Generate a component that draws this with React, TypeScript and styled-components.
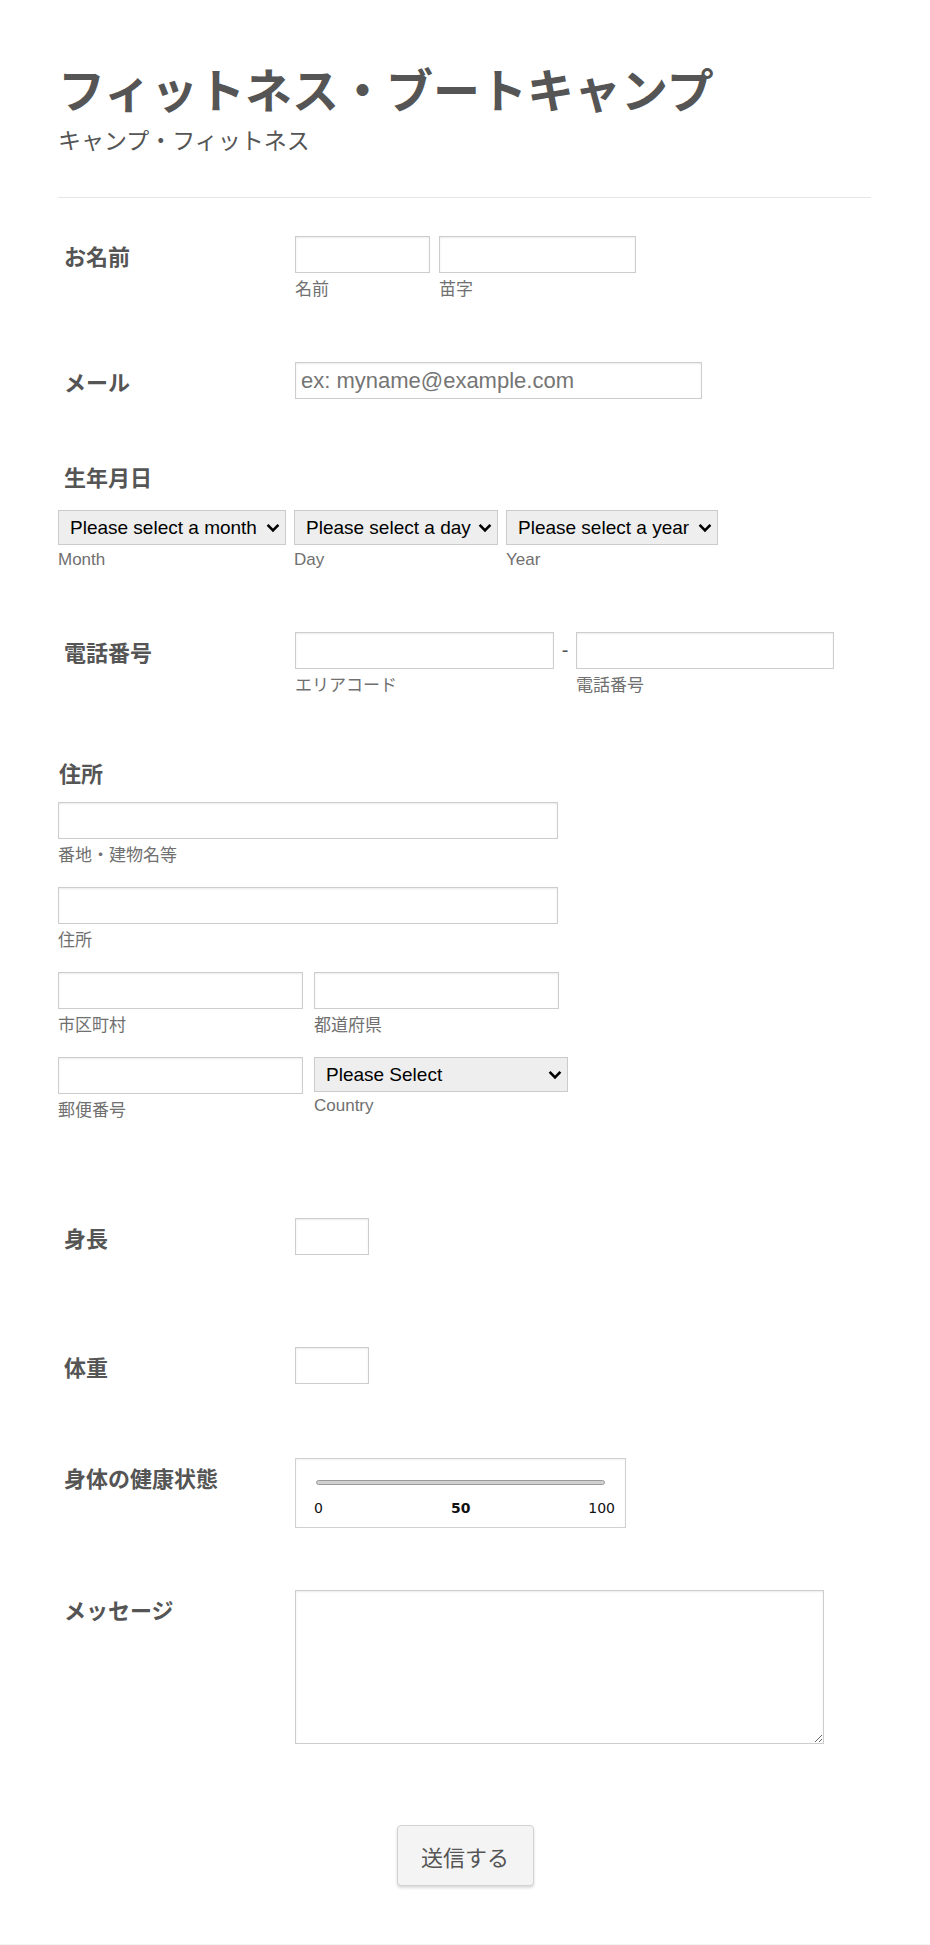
import styled, { createGlobalStyle } from "styled-components";

const JP = `"Noto Sans CJK JP", sans-serif`;
const LATIN = `"Liberation Sans", "Noto Sans CJK JP", sans-serif`;

const GlobalStyle = createGlobalStyle`
  html, body {
    margin: 0;
    padding: 0;
    background: #fff;
  }
  * {
    box-sizing: border-box;
  }
`;

function Chevron() {
  return (
    <Arrow viewBox="0 0 14 10" aria-hidden="true">
      <path d="M1.6 1.8 L7 7.4 L12.4 1.8" fill="none" stroke="#000" strokeWidth="2.6" />
    </Arrow>
  );
}

function App() {
  return (
    <>
      <GlobalStyle />
      <Page>
        <Title>フィットネス・ブートキャンプ</Title>
        <Subtitle>キャンプ・フィットネス</Subtitle>
        <Divider />

        <FieldRow $top={38}>
          <Label>お名前</Label>
          <Inputs $gap={9}>
            <Field>
              <TextInput $w={135} />
              <Sub>名前</Sub>
            </Field>
            <Field>
              <TextInput $w={197} />
              <Sub>苗字</Sub>
            </Field>
          </Inputs>
        </FieldRow>

        <FieldRow $top={62}>
          <Label>メール</Label>
          <TextInput $w={407} placeholder="ex: myname@example.com" />
        </FieldRow>

        <TopLabel $top={61} $indent={6}>
          生年月日
        </TopLabel>
        <Inputs $gap={8} $top={18}>
          <Field>
            <SelectWrap>
              <Select $w={228}>
                <option>Please select a month</option>
              </Select>
              <Chevron />
            </SelectWrap>
            <Sub $gap={5}>Month</Sub>
          </Field>
          <Field>
            <SelectWrap>
              <Select $w={204}>
                <option>Please select a day</option>
              </Select>
              <Chevron />
            </SelectWrap>
            <Sub $gap={5}>Day</Sub>
          </Field>
          <Field>
            <SelectWrap>
              <Select $w={212}>
                <option>Please select a year</option>
              </Select>
              <Chevron />
            </SelectWrap>
            <Sub $gap={5}>Year</Sub>
          </Field>
        </Inputs>

        <FieldRow $top={62}>
          <Label>電話番号</Label>
          <Inputs $gap={0}>
            <Field>
              <TextInput $w={259} />
              <Sub>エリアコード</Sub>
            </Field>
            <Dash>-</Dash>
            <Field>
              <TextInput $w={258} />
              <Sub>電話番号</Sub>
            </Field>
          </Inputs>
        </FieldRow>

        <TopLabel $top={60} $indent={1}>
          住所
        </TopLabel>
        <Field $top={14}>
          <TextInput $w={500} />
          <Sub>番地・建物名等</Sub>
        </Field>
        <Field $top={21}>
          <TextInput $w={500} />
          <Sub>住所</Sub>
        </Field>
        <Inputs $gap={11} $top={21}>
          <Field>
            <TextInput $w={245} />
            <Sub>市区町村</Sub>
          </Field>
          <Field>
            <TextInput $w={245} />
            <Sub>都道府県</Sub>
          </Field>
        </Inputs>
        <Inputs $gap={11} $top={21}>
          <Field>
            <TextInput $w={245} />
            <Sub>郵便番号</Sub>
          </Field>
          <Field>
            <SelectWrap>
              <Select $w={254} $pad={11}>
                <option>Please Select</option>
              </Select>
              <Chevron />
            </SelectWrap>
            <Sub $gap={4}>Country</Sub>
          </Field>
        </Inputs>

        <FieldRow $top={97}>
          <Label>身長</Label>
          <TextInput $w={74} />
        </FieldRow>

        <FieldRow $top={92}>
          <Label>体重</Label>
          <TextInput $w={74} />
        </FieldRow>

        <FieldRow $top={74}>
          <Label>身体の健康状態</Label>
          <SliderBox>
            <Track />
            <Scale>
              <Tick>0</Tick>
              <Tick $bold>50</Tick>
              <Tick>100</Tick>
            </Scale>
          </SliderBox>
        </FieldRow>

        <FieldRow $top={62}>
          <Label>メッセージ</Label>
          <TextArea />
        </FieldRow>

        <SubmitWrap>
          <SubmitButton type="button">送信する</SubmitButton>
        </SubmitWrap>
      </Page>
    </>
  );
}

export default App;

const Page = styled.div`
  width: 930px;
  min-height: 1945px;
  padding: 60px 58px 58px 58px;
  border-left: 1px solid #f2f2f2;
  border-bottom: 1px solid #f4f4f4;
  margin-left: -1px;
  color: #555;
  font-family: ${JP};
`;

const Title = styled.h1`
  margin: 0;
  font-size: 47px;
  line-height: 56px;
  font-weight: 700;
  color: #555;
`;

const Subtitle = styled.div`
  margin-top: 9px;
  font-size: 23px;
  line-height: 28px;
  color: #555;
`;

const Divider = styled.hr`
  margin: 44px 0 0;
  border: 0;
  height: 1px;
  background: #e6e6e6;
`;

const FieldRow = styled.div<{ $top: number }>`
  display: flex;
  align-items: flex-start;
  margin-top: ${(p) => p.$top}px;
`;

const Label = styled.label`
  flex-shrink: 0;
  width: 237px;
  padding: 3px 0 0 6px;
  font-size: 22px;
  line-height: 32px;
  font-weight: 700;
  color: #555;
`;

const TopLabel = styled.div<{ $top: number; $indent: number }>`
  margin-top: ${(p) => p.$top}px;
  padding-left: ${(p) => p.$indent}px;
  font-size: 22px;
  line-height: 32px;
  font-weight: 700;
  color: #555;
`;

const Inputs = styled.div<{ $gap: number; $top?: number }>`
  display: flex;
  align-items: flex-start;
  gap: ${(p) => p.$gap}px;
  margin-top: ${(p) => p.$top ?? 0}px;
`;

const Field = styled.div<{ $top?: number }>`
  display: flex;
  flex-direction: column;
  align-items: flex-start;
  margin-top: ${(p) => p.$top ?? 0}px;
`;

const TextInput = styled.input<{ $w: number }>`
  width: ${(p) => p.$w}px;
  height: 37px;
  padding: 0 5px;
  border: 1px solid #cdcdcd;
  border-radius: 0;
  box-shadow: inset 0 1px 2px rgba(0, 0, 0, 0.08);
  background: #fff;
  font-family: ${LATIN};
  font-size: 22px;
  color: #333;
  outline: none;

  &::placeholder {
    color: #757575;
  }
`;

const SelectWrap = styled.div`
  position: relative;
  display: flex;
`;

const Select = styled.select<{ $w: number; $pad?: number }>`
  appearance: none;
  width: ${(p) => p.$w}px;
  height: 35px;
  padding: 0 26px 0 ${(p) => p.$pad ?? 11}px;
  border: 1px solid #cbcbcb;
  border-radius: 0;
  background-color: #eeeeee;
  font-family: "Liberation Sans", sans-serif;
  font-size: 19px;
  color: #000;
`;

const Arrow = styled.svg`
  position: absolute;
  right: 6px;
  top: 13px;
  width: 14px;
  height: 10px;
  pointer-events: none;
`;

const Sub = styled.span<{ $gap?: number }>`
  margin-top: ${(p) => p.$gap ?? 7}px;
  font-family: ${LATIN};
  font-size: 17px;
  line-height: 20px;
  color: #707070;
`;

const Dash = styled.span`
  width: 22px;
  height: 37px;
  line-height: 37px;
  text-align: center;
  font-family: "Liberation Sans", sans-serif;
  font-size: 20px;
  color: #555;
`;

const SliderBox = styled.div`
  width: 331px;
  height: 70px;
  padding: 21px 10px 0 18px;
  border: 1px solid #d0d0d0;
  box-shadow: inset 0 1px 2px rgba(0, 0, 0, 0.06);
  background: #fff;
`;

const Track = styled.div`
  width: 289px;
  height: 5px;
  margin-left: 2px;
  border: 1px solid #9a9a9a;
  border-radius: 3px;
  background: #d0d0d0;
`;

const Scale = styled.div`
  display: grid;
  grid-template-columns: 137px auto 1fr;
  margin-top: 15px;
  font-family: "DejaVu Sans", sans-serif;
  font-size: 14px;
  line-height: 17px;
  color: #111;

  & > :last-child {
    justify-self: end;
  }
`;

const Tick = styled.span<{ $bold?: boolean }>`
  font-weight: ${(p) => (p.$bold ? 700 : 400)};
`;

const TextArea = styled.textarea`
  width: 529px;
  height: 154px;
  border: 1px solid #cdcdcd;
  border-radius: 0;
  box-shadow: inset 0 1px 2px rgba(0, 0, 0, 0.08);
  font-family: ${LATIN};
  font-size: 18px;
  outline: none;
`;

const SubmitWrap = styled.div`
  display: flex;
  justify-content: center;
  margin: 81px 0 0 -58px;
  width: 930px;
`;

const SubmitButton = styled.button`
  width: 137px;
  height: 61px;
  border: 1px solid #d2d2d2;
  border-radius: 4px;
  background: #f4f4f4;
  box-shadow: 0 2px 3px rgba(0, 0, 0, 0.15);
  font-family: ${JP};
  font-size: 22px;
  color: #555;
  cursor: pointer;
`;
